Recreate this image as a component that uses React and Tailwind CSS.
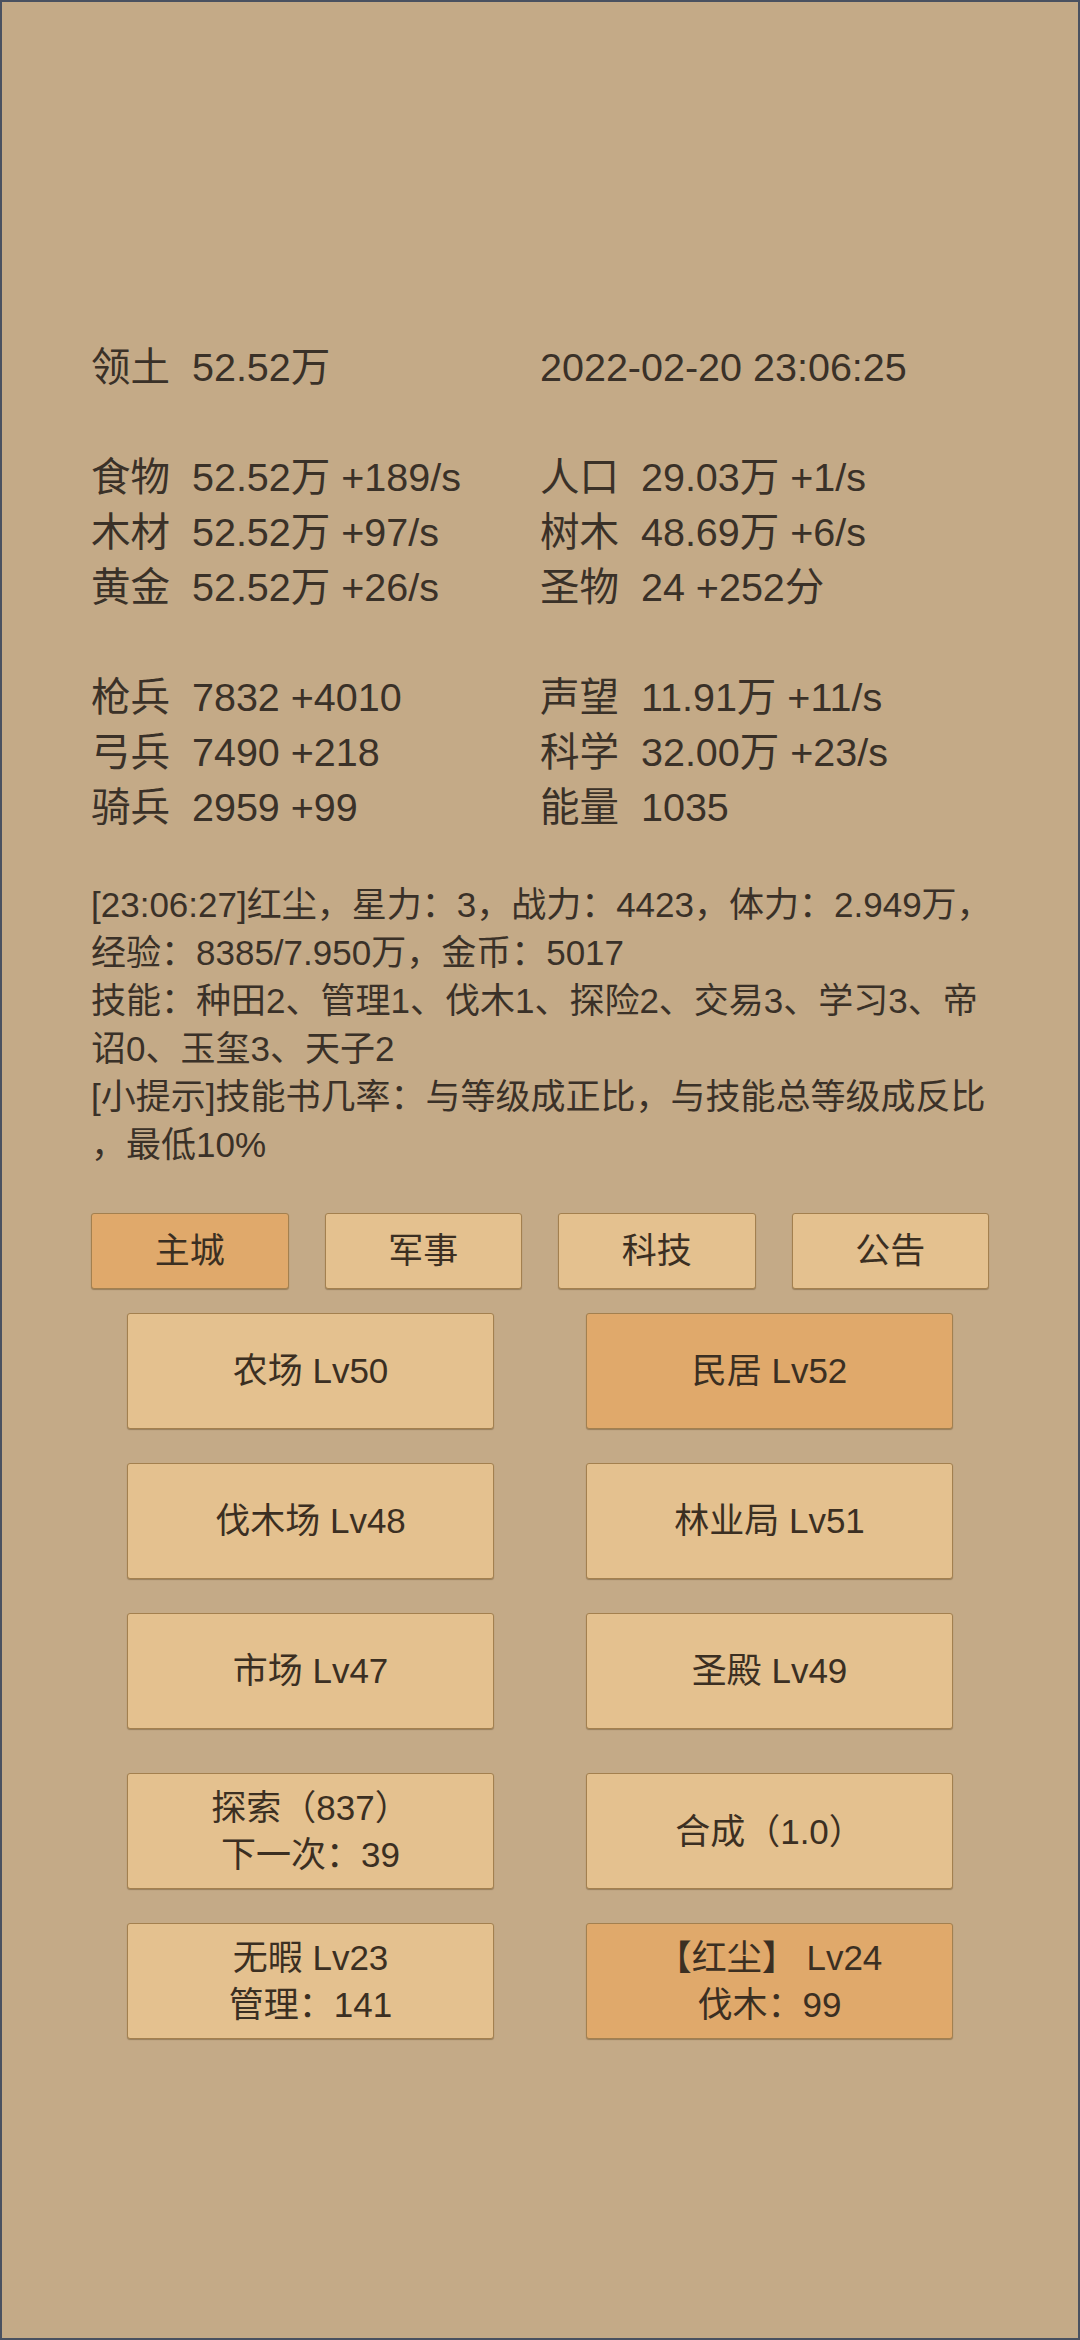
import React from "react";

const stats = [
  ["领土  52.52万", "2022-02-20 23:06:25"],
  null,
  ["食物  52.52万 +189/s", "人口  29.03万 +1/s"],
  ["木材  52.52万 +97/s", "树木  48.69万 +6/s"],
  ["黄金  52.52万 +26/s", "圣物  24 +252分"],
  null,
  ["枪兵  7832 +4010", "声望  11.91万 +11/s"],
  ["弓兵  7490 +218", "科学  32.00万 +23/s"],
  ["骑兵  2959 +99", "能量  1035"],
];

const logLines = [
  "[23:06:27]红尘，星力：3，战力：4423，体力：2.949万，",
  "经验：8385/7.950万，金币：5017",
  "技能：种田2、管理1、伐木1、探险2、交易3、学习3、帝",
  "诏0、玉玺3、天子2",
  "[小提示]技能书几率：与等级成正比，与技能总等级成反比",
  "，最低10%",
];

const tabs = [
  { label: "主城", active: true },
  { label: "军事" },
  { label: "科技" },
  { label: "公告" },
];

const buildings = [
  { lines: ["农场 Lv50"] },
  { lines: ["民居 Lv52"], active: true },
  { lines: ["伐木场 Lv48"] },
  { lines: ["林业局 Lv51"] },
  { lines: ["市场 Lv47"] },
  { lines: ["圣殿 Lv49"] },
];

const actions = [
  { lines: ["探索（837）", "下一次：39"] },
  { lines: ["合成（1.0）"] },
  { lines: ["无暇 Lv23", "管理：141"] },
  { lines: ["【红尘】 Lv24", "伐木：99"], active: true },
];

const Btn = ({ active, className, children }) => (
  <div
    className={
      "flex flex-col items-center justify-center rounded-[3px] border border-[#a3804f] shadow-[0_1px_1px_rgba(70,45,15,0.35)] text-[#3b2f22] " +
      (active ? "bg-[#e0a96b] " : "bg-[#e4c18f] ") +
      className
    }
  >
    {children}
  </div>
);

export default function App() {
  return (
    <div className="w-[1080px] min-h-[2340px] bg-[#c4aa87] border-2 border-[#4a5160] text-[#3a3128] font-['Liberation_Sans','Noto_Sans_CJK_SC',sans-serif]">
      <div className="px-[89px] pt-[338px]">
        {/* resource stats */}
        <div className="grid grid-cols-2 text-[39.5px] leading-[55px] whitespace-pre">
          {stats.map((row, i) =>
            row ? (
              <React.Fragment key={i}>
                <div>{row[0]}</div>
                <div>{row[1]}</div>
              </React.Fragment>
            ) : (
              <div key={i} className="col-span-2 h-[55px]"></div>
            )
          )}
        </div>

        {/* log */}
        <div className="mt-[46px] text-[35px] leading-[48px]">
          {logLines.map((line, i) => (
            <div key={i} className="whitespace-nowrap">
              {line}
            </div>
          ))}
        </div>

        {/* tabs */}
        <div className="mt-[44px] grid grid-cols-4 gap-[36px]">
          {tabs.map((t) => (
            <Btn key={t.label} active={t.active} className="h-[76px] text-[35px]">
              {t.label}
            </Btn>
          ))}
        </div>

        {/* buildings */}
        <div className="mt-[24px] px-[36px] grid grid-cols-2 gap-x-[92px] gap-y-[34px]">
          {buildings.map((b, i) => (
            <Btn key={i} active={b.active} className="h-[116px] text-[35px]">
              {b.lines[0]}
            </Btn>
          ))}
        </div>

        <div className="mt-[44px] px-[36px] grid grid-cols-2 gap-x-[92px] gap-y-[34px]">
          {actions.map((b, i) => (
            <Btn key={i} active={b.active} className="h-[116px] text-[35px] leading-[47px]">
              {b.lines.map((l, j) => (
                <div key={j}>{l}</div>
              ))}
            </Btn>
          ))}
        </div>
      </div>
    </div>
  );
}
